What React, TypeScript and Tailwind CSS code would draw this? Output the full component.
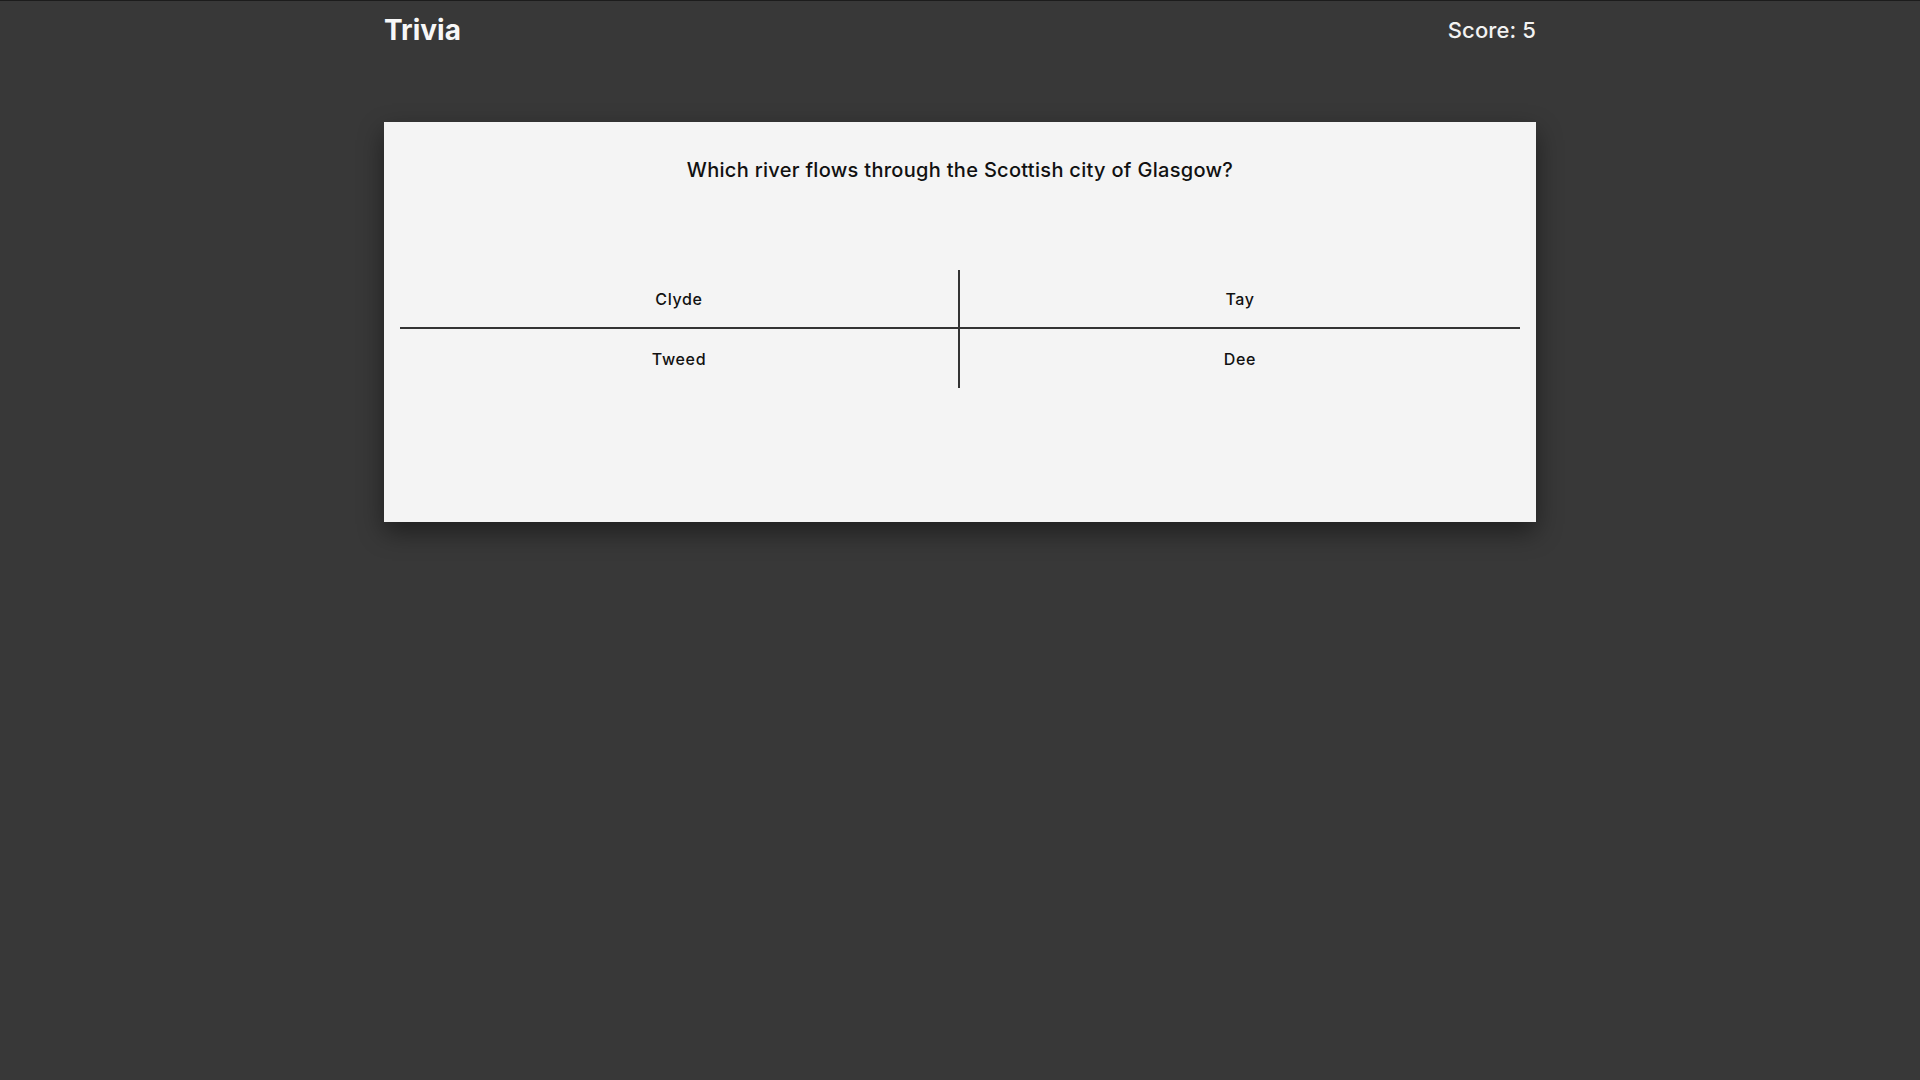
import React from "react";

const answers = ["Clyde", "Tay", "Tweed", "Dee"];

export default function App() {
	return (
		<div className="min-h-screen w-full bg-[#383838] border-t border-[#1c1c1c] font-['Inter','Noto_Sans',sans-serif]">
			<header className="mx-auto flex h-[57px] w-[60%] items-center justify-between">
				<h1 className="text-[28px] font-bold leading-none text-[#f7f7f7]">Trivia</h1>
				<div className="text-[22px] font-medium leading-none tracking-[0.005em] text-[#f2f2f2]">Score: 5</div>
			</header>

			<main className="mx-auto mt-[64px] h-[400px] w-[60%] bg-[#f4f4f4] px-4 pt-[34px] shadow-[0_10px_24px_rgba(0,0,0,0.45)]">
				<p className="mb-[86px] text-center text-[20px] font-medium leading-7 tracking-[0.015em] text-[#111]">
					Which river flows through the Scottish city of Glasgow?
				</p>
				<div className="grid grid-cols-2">
					{answers.map((answer, i) => (
						<button
							key={answer}
							className={
								"h-[59px] text-center text-[16px] font-medium tracking-[0.04em] text-[#111] border-[#333] " +
								(i % 2 === 0 ? "border-r-2 " : "") +
								(i < 2 ? "border-b-2" : "")
							}
						>
							{answer}
						</button>
					))}
				</div>
			</main>
		</div>
	);
}
